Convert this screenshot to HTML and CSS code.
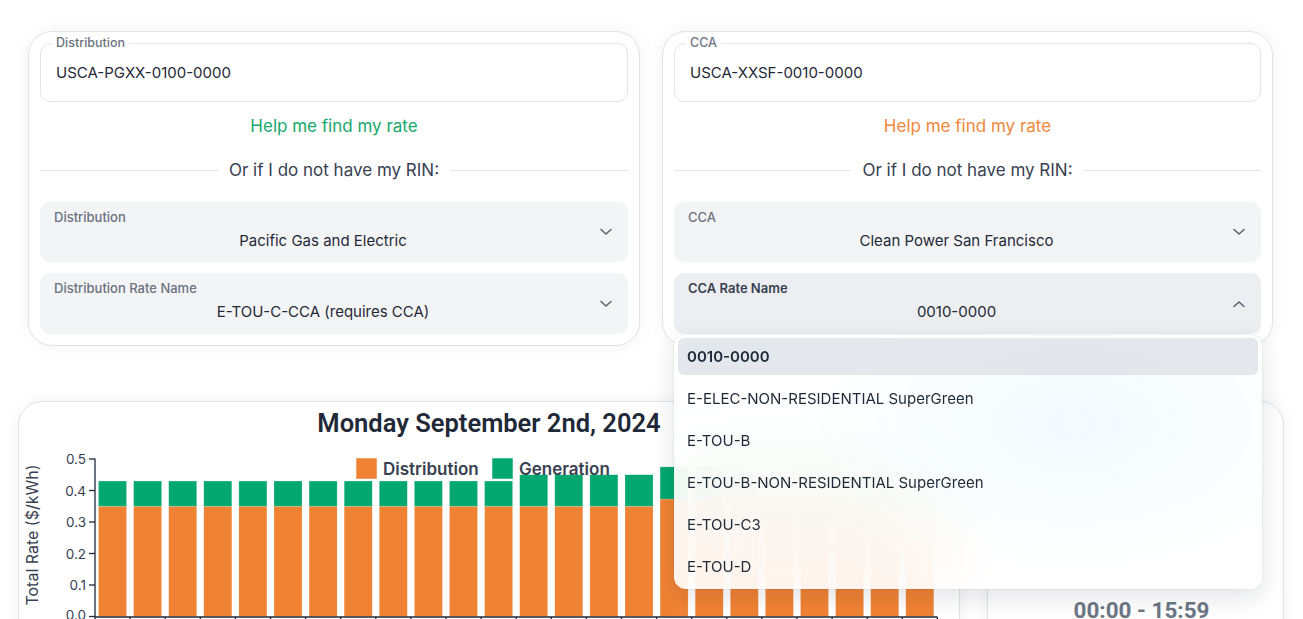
FILE: index.html
```html
<!DOCTYPE html>
<html lang="en">
<head>
<meta charset="utf-8">
<title>Rate selector</title>
<link rel="stylesheet" href="styles.css">
</head>
<body>
<div class="page">
  <section class="top">
    <div class="card">
      <fieldset class="rin"><legend>Distribution</legend><div class="rin-value">USCA-PGXX-0100-0000</div></fieldset>
      <div class="help help-green">Help me find my rate</div>
      <div class="divider"><span>Or if I do not have my RIN:</span></div>
      <div class="select">
        <div class="select-body">
          <div class="select-label">Distribution</div>
          <div class="select-value">Pacific Gas and Electric</div>
        </div>
        <svg class="chev" width="12" height="8" viewBox="0 0 12 8"><path d="M1 1.5 L6 6 L11 1.5" /></svg>
      </div>
      <div class="select">
        <div class="select-body">
          <div class="select-label">Distribution Rate Name</div>
          <div class="select-value">E-TOU-C-CCA (requires CCA)</div>
        </div>
        <svg class="chev" width="12" height="8" viewBox="0 0 12 8"><path d="M1 1.5 L6 6 L11 1.5" /></svg>
      </div>
    </div>
    <div class="card">
      <fieldset class="rin"><legend>CCA</legend><div class="rin-value">USCA-XXSF-0010-0000</div></fieldset>
      <div class="help help-orange">Help me find my rate</div>
      <div class="divider"><span>Or if I do not have my RIN:</span></div>
      <div class="select">
        <div class="select-body">
          <div class="select-label">CCA</div>
          <div class="select-value">Clean Power San Francisco</div>
        </div>
        <svg class="chev" width="12" height="8" viewBox="0 0 12 8"><path d="M1 1.5 L6 6 L11 1.5" /></svg>
      </div>
      <div class="select select-open">
        <div class="select-body">
          <div class="select-label">CCA Rate Name</div>
          <div class="select-value">0010-0000</div>
        </div>
        <svg class="chev" width="12" height="8" viewBox="0 0 12 8"><path d="M1 6.5 L6 2 L11 6.5" /></svg>
        <ul class="menu">
          <li class="menu-item active">0010-0000</li>
          <li class="menu-item">E-ELEC-NON-RESIDENTIAL SuperGreen</li>
          <li class="menu-item">E-TOU-B</li>
          <li class="menu-item">E-TOU-B-NON-RESIDENTIAL SuperGreen</li>
          <li class="menu-item">E-TOU-C3</li>
          <li class="menu-item">E-TOU-D</li>
        </ul>
      </div>
    </div>
  </section>
  <section class="bottom">
    <div class="chart-card">
      <h2 class="chart-title">Monday September 2nd, 2024</h2>
      <svg class="chart" width="940" height="200" viewBox="0 0 940 200">
        <g transform="translate(-19,-437)">
          <text class="axis-title" transform="translate(32,534) rotate(-90)" text-anchor="middle" dominant-baseline="central">Total Rate ($/kWh)</text>
          <g class="bars-orange">
            <rect x="98.5" y="505.25" width="28" height="110.25"/>
            <rect x="133.6" y="505.25" width="28" height="110.25"/>
            <rect x="168.7" y="505.25" width="28" height="110.25"/>
            <rect x="203.8" y="505.25" width="28" height="110.25"/>
            <rect x="238.9" y="505.25" width="28" height="110.25"/>
            <rect x="274" y="505.25" width="28" height="110.25"/>
            <rect x="309.1" y="505.25" width="28" height="110.25"/>
            <rect x="344.2" y="505.25" width="28" height="110.25"/>
            <rect x="379.3" y="505.25" width="28" height="110.25"/>
            <rect x="414.4" y="505.25" width="28" height="110.25"/>
            <rect x="449.5" y="505.25" width="28" height="110.25"/>
            <rect x="484.6" y="505.25" width="28" height="110.25"/>
            <rect x="519.7" y="505.25" width="28" height="110.25"/>
            <rect x="554.8" y="505.25" width="28" height="110.25"/>
            <rect x="589.9" y="505.25" width="28" height="110.25"/>
            <rect x="625" y="505.25" width="28" height="110.25"/>
            <rect x="660.1" y="498" width="28" height="117.5"/>
            <rect x="695.2" y="498" width="28" height="117.5"/>
            <rect x="730.3" y="498" width="28" height="117.5"/>
            <rect x="765.4" y="498" width="28" height="117.5"/>
            <rect x="800.5" y="498" width="28" height="117.5"/>
            <rect x="835.6" y="505.25" width="28" height="110.25"/>
            <rect x="870.7" y="505.25" width="28" height="110.25"/>
            <rect x="905.8" y="505.25" width="28" height="110.25"/>
          </g>
          <g class="bars-green">
            <rect x="98.5" y="480.05" width="28" height="25.2"/>
            <rect x="133.6" y="480.05" width="28" height="25.2"/>
            <rect x="168.7" y="480.05" width="28" height="25.2"/>
            <rect x="203.8" y="480.05" width="28" height="25.2"/>
            <rect x="238.9" y="480.05" width="28" height="25.2"/>
            <rect x="274" y="480.05" width="28" height="25.2"/>
            <rect x="309.1" y="480.05" width="28" height="25.2"/>
            <rect x="344.2" y="480.05" width="28" height="25.2"/>
            <rect x="379.3" y="480.05" width="28" height="25.2"/>
            <rect x="414.4" y="480.05" width="28" height="25.2"/>
            <rect x="449.5" y="480.05" width="28" height="25.2"/>
            <rect x="484.6" y="480.05" width="28" height="25.2"/>
            <rect x="519.7" y="473.75" width="28" height="31.5"/>
            <rect x="554.8" y="473.75" width="28" height="31.5"/>
            <rect x="589.9" y="473.75" width="28" height="31.5"/>
            <rect x="625" y="473.75" width="28" height="31.5"/>
            <rect x="660.1" y="465.9" width="28" height="32.1"/>
            <rect x="695.2" y="465.9" width="28" height="32.1"/>
            <rect x="730.3" y="465.9" width="28" height="32.1"/>
            <rect x="765.4" y="465.9" width="28" height="32.1"/>
            <rect x="800.5" y="465.9" width="28" height="32.1"/>
            <rect x="835.6" y="473.75" width="28" height="31.5"/>
            <rect x="870.7" y="473.75" width="28" height="31.5"/>
            <rect x="905.8" y="473.75" width="28" height="31.5"/>
          </g>
          <g class="axis">
            <line x1="95" y1="457.5" x2="95" y2="616"/>
            <line x1="89" y1="458" x2="95" y2="458"/>
            <line x1="89" y1="489.5" x2="95" y2="489.5"/>
            <line x1="89" y1="521" x2="95" y2="521"/>
            <line x1="89" y1="552.5" x2="95" y2="552.5"/>
            <line x1="89" y1="584" x2="95" y2="584"/>
            <line x1="89" y1="615.5" x2="95" y2="615.5"/>
            <line x1="95" y1="616" x2="937.4" y2="616"/>
            <path d="M95 616v6M130.1 616v6M165.2 616v6M200.3 616v6M235.4 616v6M270.5 616v6M305.6 616v6M340.7 616v6M375.8 616v6M410.9 616v6M446 616v6M481.1 616v6M516.2 616v6M551.3 616v6M586.4 616v6M621.5 616v6M656.6 616v6M691.7 616v6M726.8 616v6M761.9 616v6M797 616v6M832.1 616v6M867.2 616v6M902.3 616v6M937.4 616v6"/>
          </g>
          <g class="ticks" text-anchor="end">
            <text x="86" y="458" dominant-baseline="central">0.5</text>
            <text x="86" y="489.5" dominant-baseline="central">0.4</text>
            <text x="86" y="521" dominant-baseline="central">0.3</text>
            <text x="86" y="552.5" dominant-baseline="central">0.2</text>
            <text x="86" y="584" dominant-baseline="central">0.1</text>
            <text x="86" y="613.5" dominant-baseline="central">0.0</text>
          </g>
          <g class="legend">
            <rect class="sw-orange" x="356" y="457" width="21" height="21"/>
            <text x="383" y="468" dominant-baseline="central">Distribution</text>
            <rect class="sw-green" x="492" y="457" width="21" height="21"/>
            <text x="519" y="468" dominant-baseline="central">Generation</text>
          </g>
        </g>
      </svg>
    </div>
    <div class="side-card">
      <div class="time">00:00 - 15:59</div>
    </div>
  </section>
</div>
</body>
</html>
```

FILE: styles.css
```css
* { box-sizing: border-box; }
html, body { margin: 0; padding: 0; background: #ffffff; }
body {
  font-family: "Inter", "Liberation Sans", sans-serif;
  color: #1f2937;
  overflow: hidden;
}
.page { width: 1303px; }

.top {
  display: grid;
  grid-template-columns: 612px 611px;
  column-gap: 22px;
  padding: 31px 30px 0 28px;
}
.card {
  border: 1px solid #dfe3e8;
  border-radius: 24px;
  padding: 4px 11px 11px;
  background: #fff;
  box-shadow: 0 0 18px rgba(15, 23, 42, 0.05);
}
.rin {
  margin: 0;
  border: 1px solid #e2e5ea;
  border-radius: 10px;
  padding: 0 15px 6px;
  min-width: 0;
}
.rin legend {
  padding: 0 4px;
  margin-left: -4px;
  font-size: 12.5px;
  line-height: 14px;
  font-weight: 500;
  color: #6b7280;
}
.rin-value {
  font-size: 15px;
  line-height: 45px;
  color: #1f2937;
}
.help {
  margin-top: 14px;
  text-align: center;
  font-size: 17px;
  line-height: 20px;
}
.help-green { color: #17a86b; }
.help-orange { color: #f0873c; }
.divider {
  margin-top: 24px;
  display: flex;
  align-items: center;
  gap: 11px;
  font-size: 17px;
  line-height: 20px;
  color: #374151;
}
.divider::before, .divider::after {
  content: "";
  flex: 1;
  height: 1px;
  background: #e2e5ea;
}
.select {
  position: relative;
  display: flex;
  align-items: center;
  height: 60px;
  margin-top: 11px;
  padding: 0 16px 0 14px;
  background: #f3f4f6;
  border-radius: 10px;
}
.divider + .select { margin-top: 22px; }
.select + .select { height: 61px; }
.select-body {
  flex: 1;
  align-self: stretch;
  padding-top: 7px;
}
.select-label {
  font-size: 13px;
  line-height: 16px;
  font-weight: 500;
  color: #6b7280;
}
.select-value {
  margin-top: 6px;
  text-align: center;
  font-size: 15px;
  line-height: 20px;
  color: #1f2937;
}
.chev { flex: none; margin-left: 8px; }
.chev path { fill: none; stroke: #56606d; stroke-width: 1.5; stroke-linecap: round; stroke-linejoin: round; }
.select-open { background: #eceef1; }
.select-open .select-label { color: #374151; font-weight: 600; }

.menu {
  position: absolute;
  top: calc(100% + 1px);
  left: 0;
  right: -1px;
  z-index: 10;
  margin: 0;
  list-style: none;
  padding: 3px 4px 4px;
  border-radius: 12px;
  background:
    radial-gradient(ellipse 45% 60% at 68% 35%, rgba(232, 246, 251, 0.55), rgba(232, 246, 251, 0) 100%),
    rgba(255, 255, 255, 0.9);
  backdrop-filter: blur(40px);
  -webkit-backdrop-filter: blur(40px);
  box-shadow: 0 8px 24px rgba(15, 23, 42, 0.12), 0 0 0 1px rgba(15, 23, 42, 0.03);
}
.menu-item {
  height: 37px;
  line-height: 37px;
  margin-bottom: 5px;
  padding-left: 9px;
  border-radius: 6px;
  font-size: 15px;
  color: #1f2937;
}
.menu-item:last-child { margin-bottom: 0; }
.menu-item.active { background: rgba(225, 230, 234, 0.9); font-weight: 600; }

.bottom {
  display: flex;
  gap: 27px;
  margin-top: 55px;
  padding: 0 19px 0 18px;
}
.chart-card {
  width: 942px;
  flex: none;
  height: 260px;
  border: 1px solid #e0e3e8;
  border-radius: 24px;
  background: #fff;
  box-shadow: 0 0 18px rgba(15, 23, 42, 0.05);
}
.chart-title {
  margin: 0;
  padding-top: 6px;
  text-align: center;
  font-family: "Roboto", "Liberation Sans", sans-serif;
  font-size: 25.5px;
  line-height: 30px;
  font-weight: 600;
  color: #1f2937;
}
.chart { display: block; overflow: visible; }
.axis-title { font-size: 16px; fill: #374151; font-family: "Inter", sans-serif; }
.bars-orange rect { fill: #f08234; stroke: rgba(255,255,255,0.35); stroke-width: 0.5; }
.bars-green rect { fill: #02a86f; stroke: rgba(255,255,255,0.35); stroke-width: 0.5; }
.axis line, .axis path { stroke: #1f2937; stroke-width: 1.3; fill: none; }
.ticks text { font-size: 13.5px; fill: #374151; }
.legend text { font-size: 17px; font-weight: 600; fill: #374151; }
.sw-orange { fill: #f08234; stroke: rgba(255,255,255,0.5); stroke-width: 1; }
.sw-green { fill: #02a86f; stroke: rgba(255,255,255,0.5); stroke-width: 1; }

.side-card {
  flex: 1;
  height: 260px;
  border: 1px solid #e0e3e8;
  border-radius: 24px;
  background: #fff;
  box-shadow: 0 0 18px rgba(15, 23, 42, 0.05);
  padding: 196px 0 0 12px;
}
.time {
  text-align: center;
  font-family: "Roboto", "Liberation Sans", sans-serif;
  font-size: 22.5px;
  line-height: 24px;
  font-weight: 700;
  color: #6b7785;
}
```
